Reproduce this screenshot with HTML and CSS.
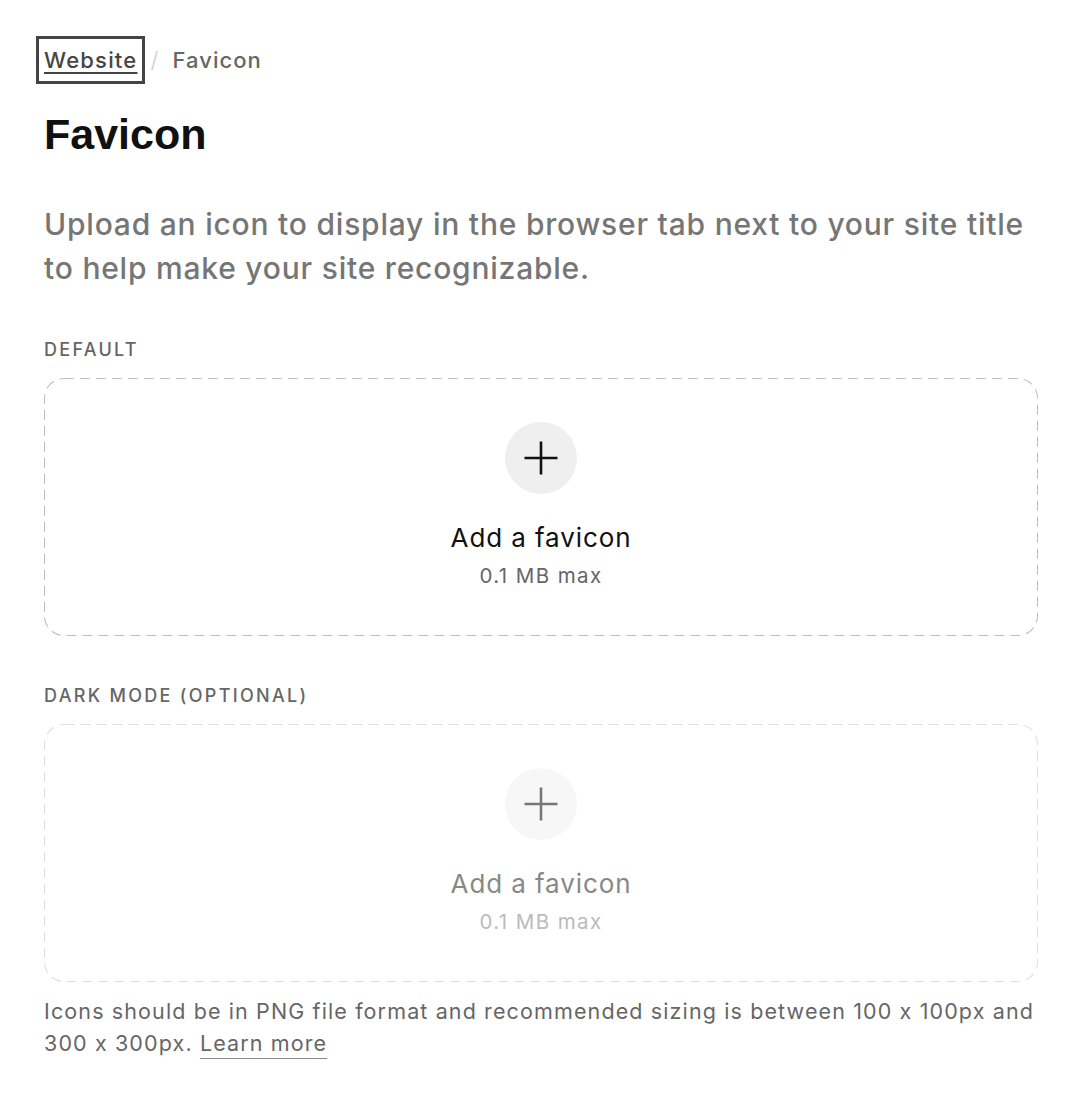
FILE: index.html
```html
<!DOCTYPE html>
<html lang="en">
<head>
<meta charset="utf-8">
<title>Favicon</title>
<link rel="stylesheet" href="styles.css">
</head>
<body>
<main class="page">
  <nav class="crumbs">
    <a class="crumb-link" href="#">Website</a>
    <span class="crumb-sep">/</span>
    <span class="crumb-current">Favicon</span>
  </nav>
  <h1 class="title">Favicon</h1>
  <p class="lead">Upload an icon to display in the browser tab next to your site title to help make your site recognizable.</p>

  <section class="field">
    <div class="label">Default</div>
    <div class="drop">
      <div class="drop-circle">
        <svg width="36" height="36" viewBox="0 0 36 36"><path d="M18 1.5V34.5M1.5 18H34.5" stroke="currentColor" stroke-width="2.6" fill="none"/></svg>
      </div>
      <div class="drop-title">Add a favicon</div>
      <div class="drop-sub">0.1 MB max</div>
    </div>
  </section>

  <section class="field">
    <div class="label">Dark mode (optional)</div>
    <div class="drop drop-disabled">
      <div class="drop-circle">
        <svg width="36" height="36" viewBox="0 0 36 36"><path d="M18 1.5V34.5M1.5 18H34.5" stroke="currentColor" stroke-width="2.6" fill="none"/></svg>
      </div>
      <div class="drop-title">Add a favicon</div>
      <div class="drop-sub">0.1 MB max</div>
    </div>
  </section>

  <p class="note">Icons should be in PNG file format and recommended sizing is between 100 x 100px and 300 x 300px. <a class="note-link" href="#">Learn more</a></p>
</main>
</body>
</html>
```

FILE: styles.css
```css
* { box-sizing: border-box; }
html, body { margin: 0; padding: 0; background: #fff; }
body { font-family: Inter, "Liberation Sans", Arial, sans-serif; color: #111; font-feature-settings: "calt" 0; }
.page { padding: 44px 48px 0 44px; }

.crumbs { display: flex; align-items: center; height: 32px; font-size: 22px; line-height: 32px; letter-spacing: 1.2px; }
.crumb-link { color: #444; text-decoration: underline; text-underline-offset: 4px; text-decoration-thickness: 2px; outline: 3px solid #444; outline-offset: 5px; font-weight: 500; }
.crumb-sep { color: #d6d6d6; margin: 0 13px 0 13px; }
.crumb-current { color: #666; font-weight: 500; letter-spacing: 1px; }

.title { margin: 34px 0 0; font-family: "Liberation Sans", Arial, sans-serif; font-weight: 700; font-size: 43px; line-height: 48px; color: #111; }

.lead { margin: 44px 0 0; font-size: 30px; line-height: 44px; color: #767676; font-weight: 500; letter-spacing: 0.78px; }

.field { margin-top: 50px; }
.label { font-size: 18px; line-height: 20px; letter-spacing: 2.3px; text-transform: uppercase; color: #666; font-weight: 500; margin-bottom: 18px; }

.drop {
  height: 258px;
  border-radius: 20px;
  background-image: url("data:image/svg+xml,%3Csvg xmlns='http://www.w3.org/2000/svg'%3E%3Crect width='100%25' height='100%25' rx='20' ry='20' fill='none' stroke='%23bdbdbd' stroke-width='2' stroke-dasharray='10 6'/%3E%3C/svg%3E");
  display: flex; flex-direction: column; align-items: center; padding-top: 44px;
}
.drop-circle { width: 72px; height: 72px; border-radius: 50%; background: #efefef; display: flex; align-items: center; justify-content: center; color: #111; }
.drop-title { margin-top: 26px; font-size: 26px; line-height: 36px; color: #111; letter-spacing: 0.9px; }
.drop-sub { margin-top: 6px; font-size: 20.5px; line-height: 28px; color: #666; letter-spacing: 1.4px; }

.drop-disabled {
  background-image: url("data:image/svg+xml,%3Csvg xmlns='http://www.w3.org/2000/svg'%3E%3Crect width='100%25' height='100%25' rx='20' ry='20' fill='none' stroke='%23dedede' stroke-width='2' stroke-dasharray='10 6'/%3E%3C/svg%3E");
}
.drop-disabled .drop-circle { background: #f7f7f7; color: #777; }
.drop-disabled .drop-title { color: #888; }
.drop-disabled .drop-sub { color: #bbb; }

.note { margin: 13px 0 0; font-size: 21.5px; line-height: 32px; color: #666; letter-spacing: 1.12px; }
.note-link { color: #666; text-decoration: underline; text-underline-offset: 7px; text-decoration-thickness: 2px; text-decoration-color: #888; }
```
